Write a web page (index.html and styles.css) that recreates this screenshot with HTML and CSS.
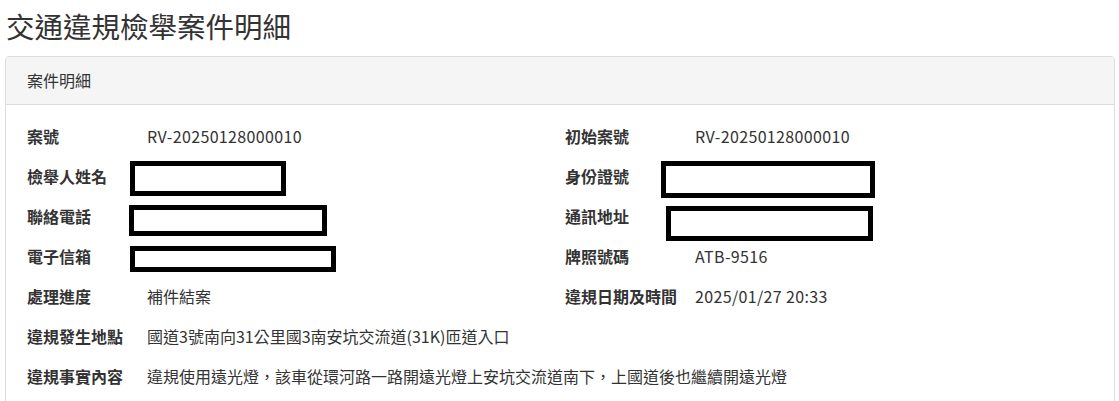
FILE: index.html
```html
<!DOCTYPE html>
<html lang="zh-Hant">
<head>
<meta charset="utf-8">
<title>交通違規檢舉案件明細</title>
<link rel="stylesheet" href="styles.css">
</head>
<body>
<div class="page">
  <h2 class="title">交通違規檢舉案件明細</h2>
  <div class="panel">
    <div class="panel-heading">案件明細</div>
    <div class="panel-body">
      <div class="grid">
        <div class="label">案號</div>
        <div class="value"><span class="latin">RV-20250128000010</span></div>
        <div class="label">初始案號</div>
        <div class="value"><span class="latin">RV-20250128000010</span></div>

        <div class="label">檢舉人姓名</div>
        <div class="value"><span class="redact r1"></span></div>
        <div class="label">身份證號</div>
        <div class="value"><span class="redact r4"></span></div>

        <div class="label">聯絡電話</div>
        <div class="value"><span class="redact r2"></span></div>
        <div class="label">通訊地址</div>
        <div class="value"><span class="redact r5"></span></div>

        <div class="label">電子信箱</div>
        <div class="value"><span class="redact r3"></span></div>
        <div class="label">牌照號碼</div>
        <div class="value"><span class="latin">ATB-9516</span></div>

        <div class="label">處理進度</div>
        <div class="value">補件結案</div>
        <div class="label">違規日期及時間</div>
        <div class="value"><span class="latin">2025/01/27 20:33</span></div>

        <div class="label">違規發生地點</div>
        <div class="value wide">國道3號南向31公里國3南安坑交流道(31K)匝道入口</div>

        <div class="label">違規事實內容</div>
        <div class="value wide">違規使用遠光燈，該車從環河路一路開遠光燈上安坑交流道南下，上國道後也繼續開遠光燈</div>
      </div>
    </div>
  </div>
</div>
</body>
</html>
```
FILE: styles.css
```css
html, body {
  margin: 0;
  padding: 0;
  background: #fff;
}
body {
  font-family: "Noto Sans CJK TC", "Noto Sans", sans-serif;
  color: #333;
  font-size: 16px;
}
.page {
  padding: 0 0 0 5px;
  width: 1110px;
}
.title {
  margin: 0;
  padding: 10px 0 0 1px;
  height: 56px;
  box-sizing: border-box;
  font-size: 28.5px;
  font-weight: 400;
  line-height: 32px;
  color: #333;
}
.panel {
  border: 1px solid #ddd;
  border-radius: 4px;
  background: #fff;
  height: 360px;
}
.panel-heading {
  background: #f5f5f5;
  border-bottom: 1px solid #ddd;
  border-radius: 3px 3px 0 0;
  height: 47px;
  line-height: 47px;
  padding: 0 21px;
  font-size: 16px;
}
.panel-body {
  padding: 11px 21px 0 21px;
}
.grid {
  display: grid;
  grid-template-columns: 120px 418px 130px 1fr;
  grid-auto-rows: 40px;
  align-items: center;
}
.label {
  font-weight: 700;
  white-space: nowrap;
}
.value {
  position: relative;
  height: 40px;
  line-height: 40px;
  white-space: nowrap;
}
.latin {
  letter-spacing: 0.35px;
}
.wide {
  grid-column: 2 / -1;
}
.redact {
  position: absolute;
  border: 5px solid #000;
  background: #fff;
  box-sizing: border-box;
}
.r1 { left: -17px; top: 5px; width: 156px; height: 35px; }
.r2 { left: -18px; top: 9px; width: 198px; height: 31px; }
.r3 { left: -17px; top: 10px; width: 206px; height: 26px; }
.r4 { left: -34px; top: 5px; width: 214px; height: 37px; }
.r5 { left: -29px; top: 10px; width: 207px; height: 35px; }
```
